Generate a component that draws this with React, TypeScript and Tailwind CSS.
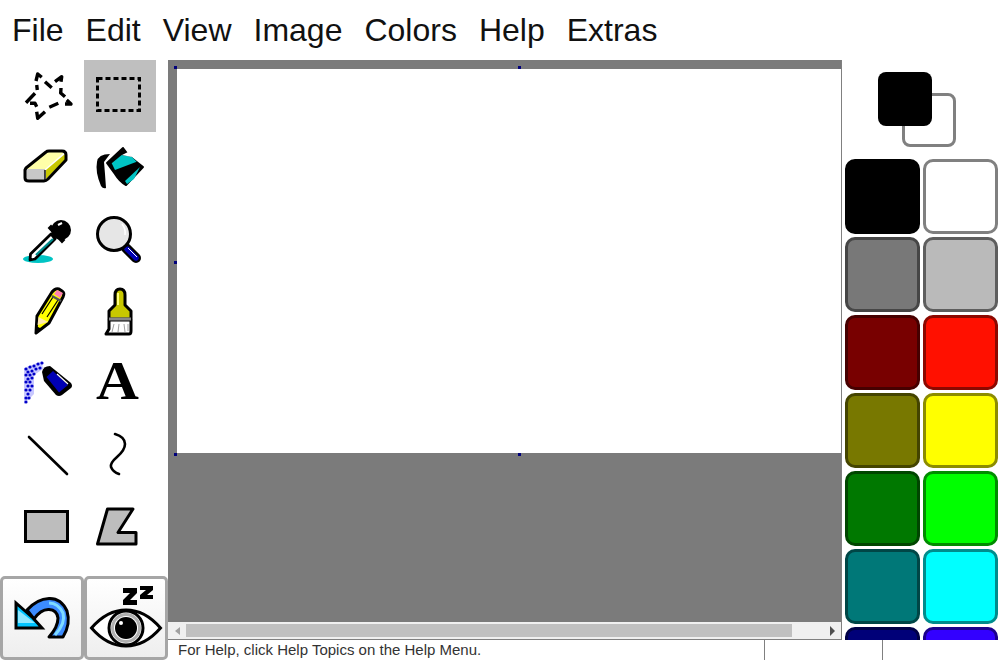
import React from 'react';

const menus = ['File', 'Edit', 'View', 'Image', 'Colors', 'Help', 'Extras'];

const swatches = [
  'bg-black border-black',
  'bg-white border-[#808080]',
  'bg-[#787878] border-[#464646]',
  'bg-[#bababa] border-[#5e5e5e]',
  'bg-[#780000] border-[#460000]',
  'bg-[#ff1000] border-[#8c0800]',
  'bg-[#787800] border-[#444400]',
  'bg-[#ffff00] border-[#8c8c00]',
  'bg-[#007800] border-[#004600]',
  'bg-[#00ff00] border-[#008c00]',
  'bg-[#007878] border-[#004646]',
  'bg-[#00ffff] border-[#008c8c]',
  'bg-[#000078] border-[#000046]',
  'bg-[#3300ff] border-[#1c008c]',
];

// spray dots of the airbrush, [x, y] inside its 72px cell
const sprayDots = [
  [14, 21], [18, 19], [22, 18], [26, 16], [30, 15],
  [16, 24], [20, 23], [24, 21], [28, 20],
  [14, 27], [18, 27], [22, 26],
  [16, 31], [20, 30], [14, 34], [18, 34],
  [16, 38], [20, 38], [14, 42], [18, 42],
  [16, 46], [14, 50], [17, 50], [14, 54],
];

const Icon = ({ children }: { children: React.ReactNode }) => (
  <svg width="72" height="72" viewBox="0 0 72 72" className="block">
    {children}
  </svg>
);

const tools = [
  <Icon key="lasso">
    <path
      d="M24 21 25.7 14 29.7 17.3M33 21.7 39.7 27.7M43 21.7 49.7 16.7 49 21.7M49 28 48.7 33 53 36.7M54.7 40 59 44 53 44M46.3 43.3 37.3 47.3M33 51.7 25.7 58.3 24.7 51.7M24.7 46.7 23 43.3 18 43.3M14 42.7 23 33.3M25.3 30 24.7 25"
      fill="none"
      stroke="#000"
      strokeWidth="3.4"
      strokeLinejoin="round"
    />
  </Icon>,
  <Icon key="select">
    <rect x="13.5" y="18.5" width="42" height="32" fill="none" stroke="#000" strokeWidth="3" strokeDasharray="5 3" />
  </Icon>,
  <Icon key="eraser">
    <path d="M14 36 35 20H53L33 37H14Z" fill="#ffffa8" />
    <path d="M14 37H33V48H14Z" fill="#c8c8c8" />
    <path d="M34 38 53 22V28L34 47Z" fill="#c8c800" />
    <path d="M33 38V48" stroke="#000" strokeWidth="1.4" />
    <path
      d="M14 36 34 20Q35 19 37 19H50Q54 19 54 23V28L36 47Q34 49 32 49H17Q13 49 13 46V38Z"
      fill="none"
      stroke="#000"
      strokeWidth="3"
      strokeLinejoin="round"
    />
  </Icon>,
  <Icon key="fill">
    <path d="M13 30Q14 22 26 22L20 30 21 42 22 56Q19 57 17 54 11 40 13 30Z" fill="#000" />
    <path d="M23 31 39 16 45 24 59 35 42 53Q36 50 31 42Z" fill="#000" stroke="#000" strokeWidth="2" strokeLinejoin="round" />
    <path d="M27.7 31.3 37.7 23 47.7 24.7 52.7 29.7 31 38Z" fill="#00c4c4" />
    <path d="M41 49 56 35 50 47 43 52Z" fill="#00c4c4" />
    <path d="M38 23 44 20 48 25Z" fill="#fff" />
  </Icon>,
  <Icon key="picker">
    <ellipse cx="26" cy="55" rx="15" ry="4" fill="#00c4c4" />
    <path d="M18 56 18.5 50 39 30 43 35 23 55Z" fill="#fff" stroke="#000" strokeWidth="2.8" strokeLinejoin="round" />
    <path d="M24 51 41 35" stroke="#008c8c" strokeWidth="2.4" />
    <circle cx="49" cy="26" r="10" fill="#000" />
    <path d="M37 24 39 22 52 36 50 38Z" fill="#000" stroke="#000" strokeWidth="2" />
    <path d="M46 21 50 19" stroke="#fff" strokeWidth="2" />
  </Icon>,
  <Icon key="zoom">
    <path d="M42 44 52 54" stroke="#000" strokeWidth="10" strokeLinecap="round" />
    <path d="M43 45 52 54" stroke="#0000b4" strokeWidth="5.4" strokeLinecap="round" />
    <path d="M44 44 53 53" stroke="#fff" strokeWidth="1" />
    <circle cx="30" cy="30" r="16.5" fill="#e6e6e6" stroke="#000" strokeWidth="3" />
    <path d="M38 20Q42 25 41 31" fill="none" stroke="#fff" strokeWidth="1.5" />
  </Icon>,
  <Icon key="pencil">
    <path d="M24 57 25 40 40 16Q43 12 47 13L50 15Q53 17 51 21L37 47Z" fill="#ffff00" stroke="#000" strokeWidth="3" strokeLinejoin="round" />
    <path d="M25.5 49 26.5 41 36 46Z" fill="#ffe8b0" />
    <path d="M23 58 24 50 30 53Z" fill="#000" />
    <path d="M30 38 41 21M35 41 46 24" stroke="#000" strokeWidth="1.2" />
    <path d="M42 18 45 14 51 17 48 22Z" fill="#ff80b0" />
    <path d="M40 20 49 25" stroke="#555" strokeWidth="2.4" />
  </Icon>,
  <Icon key="brush">
    <path d="M31 19Q31 13 36 13 41 13 41 19V29L47 35V43H25V35L31 29Z" fill="#c8c800" stroke="#000" strokeWidth="3" strokeLinejoin="round" />
    <path d="M34 17V29" stroke="#ffff80" strokeWidth="2" />
    <path d="M25 44H47V55Q47 58 45 58H22L25 53Z" fill="#fff" stroke="#000" strokeWidth="3" strokeLinejoin="round" />
    <path d="M25 43H47" stroke="#888" strokeWidth="3" />
    <path d="M30 48 28 56M35 48 34 56M40 48 41 56M44 48 44 55" stroke="#888" strokeWidth="0.8" />
  </Icon>,
  <Icon key="airbrush">
    <path d="M12 20 30 13 31 21 22 27 22 46 12 56Z" fill="#c8c8ff" />
    <g fill="#0000c8">
      {sprayDots.map(([x, y]) => (
        <circle key={`${x}-${y}`} cx={x} cy={y} r="1.6" />
      ))}
    </g>
    <path d="M30 24Q31 18 38 18L59 35Q61 38 59 40L50 47Q47 49 44 47L32 33Z" fill="#000" />
    <path d="M34.5 29 41 23 56 37 47 44.5Z" fill="#0000b4" />
    <path d="M45 26 56 36" stroke="#fff" strokeWidth="1.2" />
  </Icon>,
  <div key="text" className="w-[72px] h-[72px] flex items-center justify-center pr-[6px] pb-[7px] font-['Liberation_Serif',serif] font-bold text-[54px] leading-none text-black">
    <span className="scale-x-110">A</span>
  </div>,
  <Icon key="line">
    <path d="M17 17 55 54" stroke="#000" strokeWidth="2.6" strokeLinecap="round" />
  </Icon>,
  <Icon key="curve">
    <path d="M31 14Q41 17 41 24 41 30 33 37 26 43 27 47 29 52 35 54" fill="none" stroke="#000" strokeWidth="2.6" strokeLinecap="round" />
  </Icon>,
  <Icon key="rect">
    <rect x="13.5" y="19.5" width="42" height="30" fill="#bdbdbd" stroke="#000" strokeWidth="3" />
  </Icon>,
  <Icon key="poly">
    <path d="M23.5 17H49L34 40.5H52V52H13.5Z" fill="#bdbdbd" stroke="#000" strokeWidth="3" strokeLinejoin="round" />
  </Icon>,
];

const Handle = ({ className }: { className: string }) => (
  <div className={`absolute w-[3px] h-[3px] bg-[#00007b] ${className}`} />
);

export default function App() {
  return (
    <div className="w-[1000px] h-[660px] overflow-hidden bg-white flex flex-col font-['Liberation_Sans',Arial,sans-serif]">
      <nav className="h-[60px] shrink-0 flex items-center gap-[22px] pl-3 text-[32px] text-[#111]">
        {menus.map((m) => (
          <span key={m}>{m}</span>
        ))}
      </nav>

      <div className="flex-1 flex min-h-0">
        <aside className="w-[168px] shrink-0 flex flex-col justify-between">
          <div className="grid grid-cols-[72px_72px] auto-rows-[72px] pl-3">
            {tools.map((t, i) => (
              <div key={i} className={i === 1 ? 'bg-[#bfbfbf]' : ''}>
                {t}
              </div>
            ))}
          </div>
          <div className="flex h-[84px]">
            <button className="w-[84px] border-[3px] border-[#a6a6a6] rounded-[5px] bg-gradient-to-b from-white to-[#eeeeee] flex items-center justify-center">
              <svg width="78" height="78" viewBox="0 0 78 78" className="block">
                <path
                  d="M46 58H60Q68 45 64 32 58 19 46 19.5 34 20 24 31L31 40Q38 30 46 30.5 54 31 55 39 55 48 46 58Z"
                  fill="#3c8cff"
                  stroke="#000"
                  strokeWidth="3"
                  strokeLinejoin="round"
                />
                <path d="M52 56Q63 44 60 34 55 24 46 24" fill="none" stroke="#7fdcff" strokeWidth="3" />
                <path d="M13 24V49H39L30 39 13 24Z" fill="#00c4ff" stroke="#000" strokeWidth="3" strokeLinejoin="miter" />
                <path d="M15 44H32L15 31Z" fill="#90e8ff" />
              </svg>
            </button>
            <button className="w-[84px] border-[3px] border-[#a6a6a6] rounded-[5px] bg-gradient-to-b from-white to-[#eeeeee] flex items-center justify-center">
              <svg width="78" height="78" viewBox="0 0 78 78" className="block">
                <path d="M36 9H50V14L43 21H50V26H36V21L43 14H36Z" fill="#000" />
                <path d="M53 7H66V11L60 16H66V20H53V16L59 11H53Z" fill="#000" />
                <path d="M4.5 49Q20 31 39 31 58 31 73.5 49 58 67 39 67 20 67 4.5 49Z" fill="#fff" stroke="#000" strokeWidth="3" />
                <circle cx="39" cy="49" r="17" fill="#fff" stroke="#000" strokeWidth="3" />
                <circle cx="39" cy="49" r="13.5" fill="none" stroke="#b0b0b0" strokeWidth="3" />
                <circle cx="39" cy="49" r="11" fill="#000" />
                <circle cx="34" cy="44" r="2" fill="#fff" />
              </svg>
            </button>
          </div>
        </aside>

        <div className="flex-1 min-w-0 flex flex-col">
          <div className="h-[580px] flex">
            <main className="w-[674px] flex flex-col border-r border-[#808080] border-b">
              <div className="relative flex-1 bg-[#7b7b7b] pl-[9px] pt-[9px]">
                <div className="bg-white h-[384px]" />
                <Handle className="left-[6px] top-[6px]" />
                <Handle className="left-[350px] top-[6px]" />
                <Handle className="left-[6px] top-[201px]" />
                <Handle className="left-[6px] top-[393px]" />
                <Handle className="left-[350px] top-[393px]" />
              </div>
              <div className="h-[17px] bg-[#f0f0f0] flex items-center">
                <span className="w-[18px] flex justify-center">
                  <span className="border-y-[4px] border-y-transparent border-r-[5px] border-r-[#a0a0a0]" />
                </span>
                <div className="w-[606px] h-[13px] bg-[#c0c0c0]" />
                <span className="flex-1 flex justify-end pr-[6px]">
                  <span className="border-y-[5px] border-y-transparent border-l-[5px] border-l-[#505050]" />
                </span>
              </div>
            </main>

            <div className="flex-1 min-w-0 overflow-hidden pl-[3px]">
              <div className="relative h-[99px]">
                <div className="absolute left-[57px] top-[33px] w-[54px] h-[54px] rounded-[8px] border-[3px] border-[#808080] bg-white" />
                <div className="absolute left-[33px] top-[12px] w-[54px] h-[54px] rounded-[8px] bg-black" />
              </div>
              <div className="grid grid-cols-[75px_75px] auto-rows-[75px] gap-[3px]">
                {swatches.map((s) => (
                  <div key={s} className={`rounded-[10px] border-[3px] ${s}`} />
                ))}
              </div>
            </div>
          </div>

          <footer className="flex-1 flex text-[15px] leading-[20px] text-[#333]">
            <div className="w-[597px] pl-[10px] border-r border-[#808080]">For Help, click Help Topics on the Help Menu.</div>
            <div className="w-[118px] border-r border-[#808080]" />
          </footer>
        </div>
      </div>
    </div>
  );
}
